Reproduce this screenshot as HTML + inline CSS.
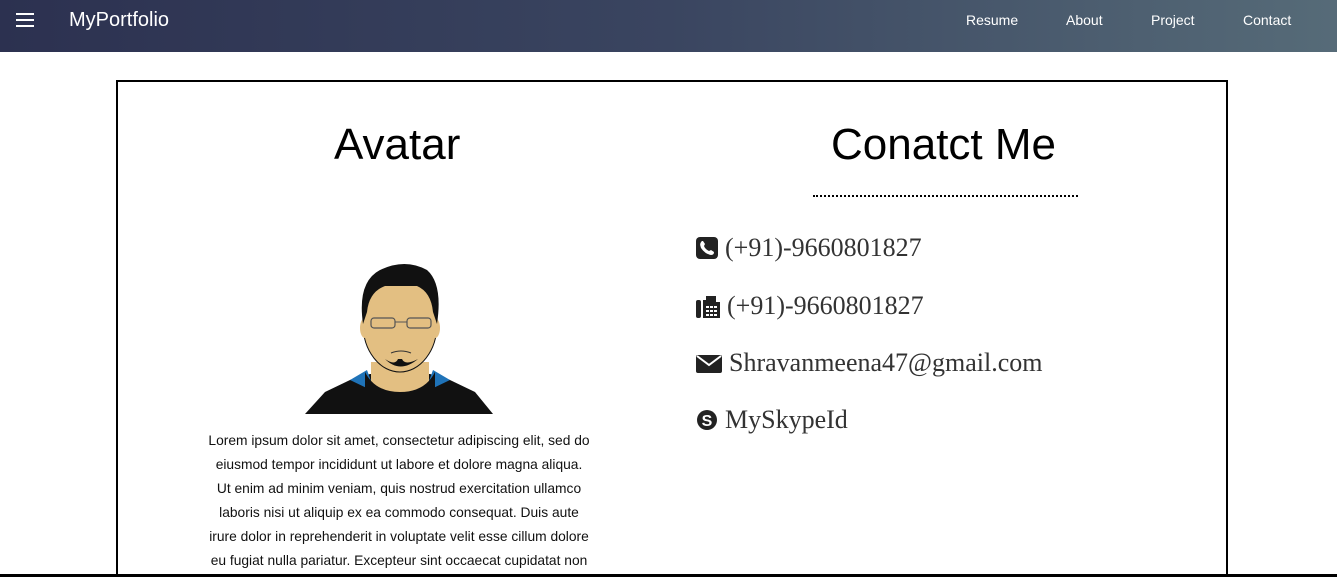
<!DOCTYPE html>
<html style="overflow:hidden;height:577px"><head><style>
body{margin:0;width:1337px;height:577px;overflow:hidden;background:#fff;font-family:"Liberation Sans",sans-serif;position:relative}
nav{position:absolute;left:0;top:0;width:1337px;height:52px;background:linear-gradient(90deg,#2c3150 0%,#3a4560 50%,#566b78 100%)}
.ham{position:absolute;left:16px;top:13px;width:18px}
.ham div{height:2px;background:#fff;margin-bottom:4px}
.brand{position:absolute;left:69px;top:9px;color:#fff;font-size:20px}
.links a{position:absolute;top:12px;color:#fff;font-size:14px;text-decoration:none}
.box{position:absolute;left:116px;top:80px;width:1108px;height:520px;border:2px solid #000}
h1{position:absolute;margin:0;font-weight:normal;font-size:44px;color:#000}
.dots{position:absolute;left:813px;top:195px;width:265px;border-top:2px dotted #000}
.c{position:absolute;left:696px;font-family:"Liberation Serif",serif;font-size:26px;color:#333;display:flex;align-items:center;white-space:nowrap}
.c svg{margin-right:7px}
p{position:absolute;left:150px;top:429px;width:498px;margin:0;text-align:center;font-size:13.8px;line-height:24px;color:#111;white-space:nowrap}
.bot{position:absolute;left:0;top:574px;width:1337px;height:3px;background:#000}
</style></head><body>
<nav><div class="ham"><div></div><div></div><div></div></div><div class="brand">MyPortfolio</div>
<div class="links"><a style="left:966px">Resume</a><a style="left:1066px">About</a><a style="left:1151px">Project</a><a style="left:1243px">Contact</a></div></nav>
<div class="box"></div>
<h1 style="left:334px;top:120px">Avatar</h1>
<h1 style="left:831px;top:120px">Conatct Me</h1>
<div class="dots"></div>
<svg style="position:absolute;left:305px;top:262px" width="190" height="152" viewBox="0 0 190 152">
<path d="M0 152 L20 130 L45 118 L65 112 L125 112 L145 118 L170 130 L188 152Z" fill="#111"/>
<path d="M45 118 L62 108 L70 130Z M145 118 L128 108 L120 130Z" fill="#1f73b8"/>
<path d="M66 100 L66 125 Q95 140 124 125 L124 100Z" fill="#e3bf82"/>
<path d="M60 110 Q70 130 95 130 Q120 130 130 110 L130 152 L60 152Z" fill="#111"/>
<ellipse cx="95" cy="62" rx="37" ry="48" fill="#e3bf82" stroke="#111" stroke-width="1"/>
<ellipse cx="60" cy="66" rx="5" ry="10" fill="#e3bf82"/><ellipse cx="130" cy="66" rx="5" ry="10" fill="#e3bf82"/>
<path d="M58 62 Q52 20 75 8 Q100 -4 122 8 Q138 22 132 62 L128 50 Q126 30 112 24 L80 24 Q64 30 62 50Z" fill="#111"/>
<rect x="66" y="56" width="24" height="10" rx="3" fill="none" stroke="#555" stroke-width="1.2"/>
<rect x="102" y="56" width="24" height="10" rx="3" fill="none" stroke="#555" stroke-width="1.2"/>
<path d="M90 60 L102 60" stroke="#555"/>
<path d="M86 91 Q96 87 106 91" stroke="#333" fill="none"/>
<path d="M80 97 Q95 112 113 97 Q100 104 97 97 L93 97 Q90 104 80 97Z" fill="#111"/>
</svg>
<div class="c" style="top:233px"><svg width="22" height="22" viewBox="0 0 22 22"><rect width="22" height="22" rx="4" fill="#222"/><path d="M6 4 Q3 6 5 11 Q9 17 15 18 Q18 18 18 15 L15 13 L13 14 Q9 12 8 9 L9 7 L7 4Z" fill="#fff"/></svg>(+91)-9660801827</div>
<div class="c" style="top:291px"><svg width="24" height="24" viewBox="0 0 24 24"><rect x="0" y="6" width="5" height="18" rx="2" fill="#222"/><path d="M7 6 L7 24 L24 24 L24 8 L20 8 L20 2 L10 2 L10 6Z" fill="#222"/><g fill="#fff"><rect x="10" y="12" width="3" height="2"/><rect x="14" y="12" width="3" height="2"/><rect x="18" y="12" width="3" height="2"/><rect x="10" y="16" width="3" height="2"/><rect x="14" y="16" width="3" height="2"/><rect x="18" y="16" width="3" height="2"/><rect x="10" y="20" width="3" height="2"/><rect x="14" y="20" width="3" height="2"/><rect x="18" y="20" width="3" height="2"/></g></svg>(+91)-9660801827</div>
<div class="c" style="top:348px"><svg width="26" height="20" viewBox="0 0 26 20"><rect y="2" width="26" height="18" rx="2" fill="#222"/><path d="M1 3 L13 12 L25 3" stroke="#fff" stroke-width="2" fill="none"/></svg>Shravanmeena47@gmail.com</div>
<div class="c" style="top:405px"><svg width="22" height="22" viewBox="0 0 22 22"><circle cx="11" cy="11" r="10" fill="#222"/><text x="11" y="17" font-size="16" font-weight="bold" text-anchor="middle" fill="#fff" font-family="Liberation Sans">S</text></svg>MySkypeId</div>
<p>Lorem ipsum dolor sit amet, consectetur adipiscing elit, sed do<br>eiusmod tempor incididunt ut labore et dolore magna aliqua.<br>Ut enim ad minim veniam, quis nostrud exercitation ullamco<br>laboris nisi ut aliquip ex ea commodo consequat. Duis aute<br>irure dolor in reprehenderit in voluptate velit esse cillum dolore<br>eu fugiat nulla pariatur. Excepteur sint occaecat cupidatat non</p>
<div class="bot"></div>
</body></html>
